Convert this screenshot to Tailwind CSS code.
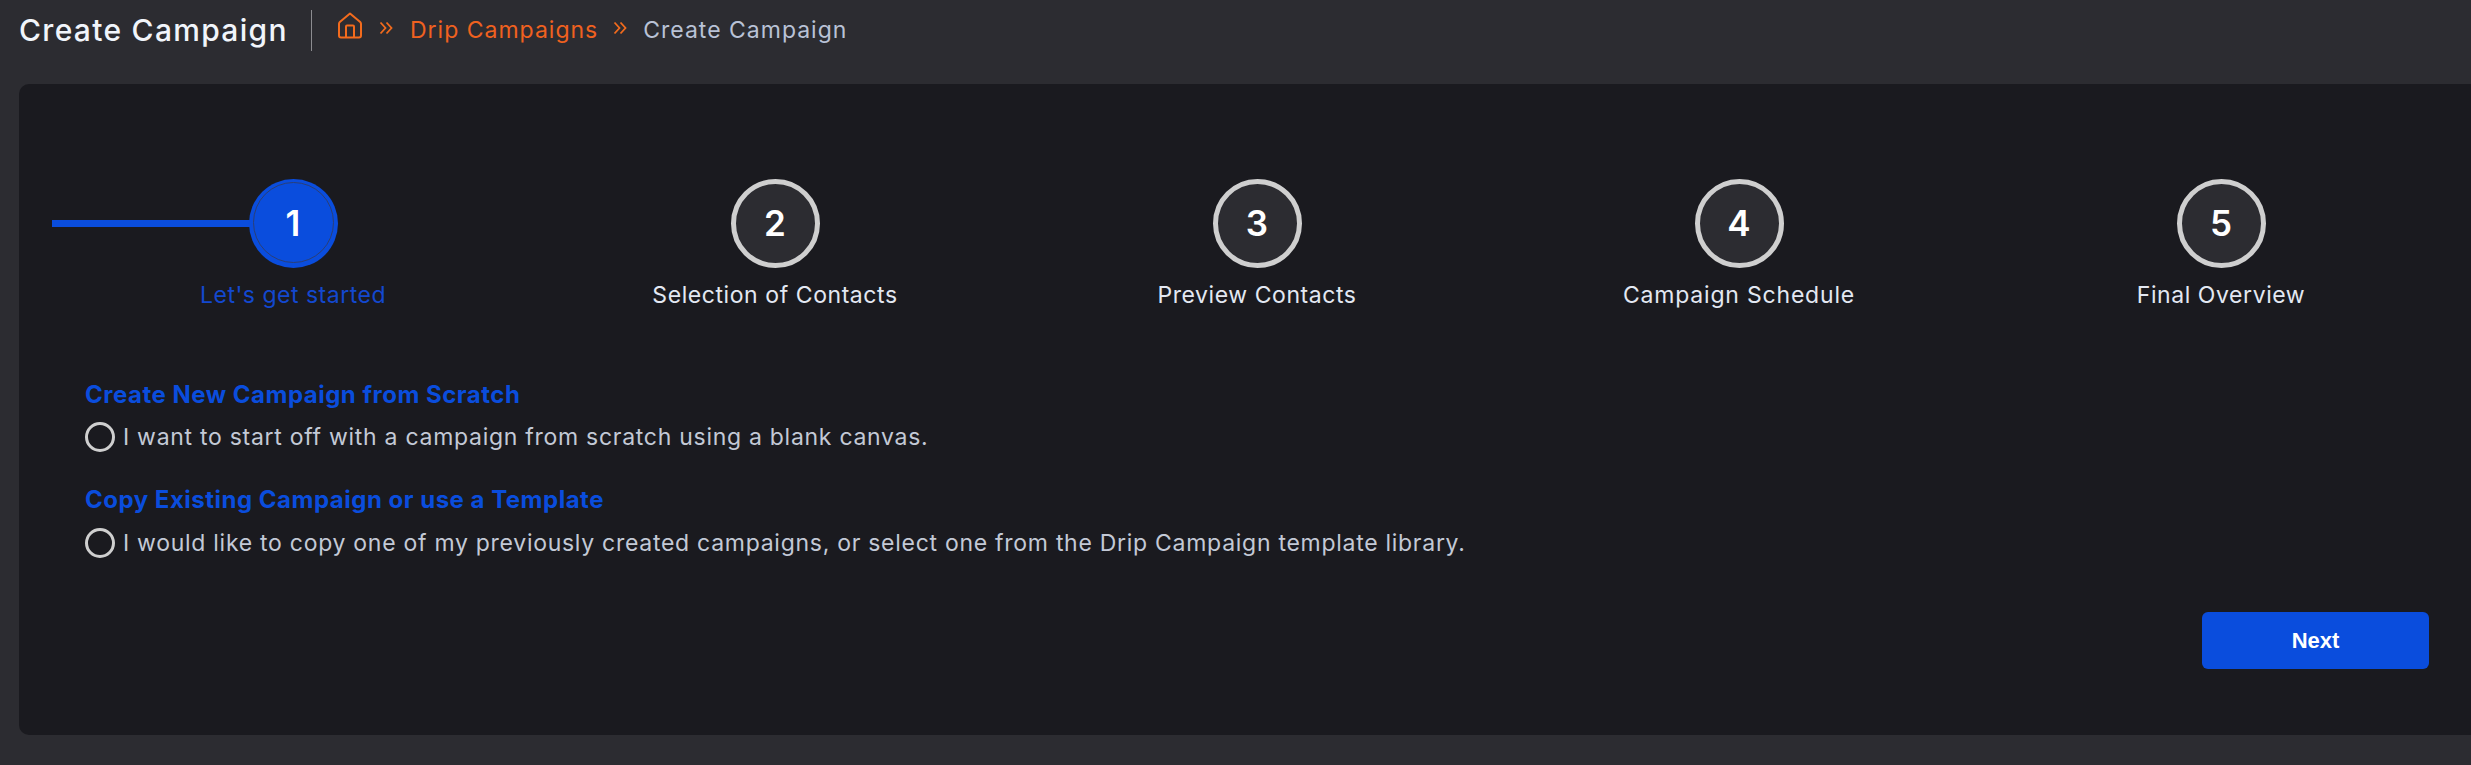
<!DOCTYPE html>
<html><head><meta charset="utf-8"><script src="https://cdn.jsdelivr.net/npm/@tailwindcss/browser@4"></script></head>
<body class="bg-[#2c2c31] font-['Inter',sans-serif] w-[2471px] h-[765px] overflow-hidden">
<header class="h-[84px] pl-[19px] pt-[8px]">
  <div class="flex items-center h-[44px]">
    <h1 class="text-[30px] leading-[44px] font-medium text-[#f1f5fb] w-[269px] whitespace-nowrap tracking-[1.3px]">Create Campaign</h1>
    <div class="w-px h-[41px] bg-[#8c8c90] ml-[23px] mr-[24px]"></div>
    <svg class="w-[28px] h-[28px] -mt-[8px]" viewBox="0 0 28 28" fill="none" stroke="#f26b1d" stroke-width="2" stroke-linejoin="round"><path d="M14 1.500 24.200 10a2.500 2.500 0 0 1 .8 1.800V23.500a2 2 0 0 1-2 2H5a2 2 0 0 1-2-2V11.800a2.500 2.500 0 0 1 .8-1.800Z"/><path d="M10 25.500V14.500a1 1 0 0 1 1-1h6a1 1 0 0 1 1 1V25.500"/></svg>
    <svg class="w-[14px] h-[14px] ml-[15px] -mt-[4px]" viewBox="0 0 14 14" fill="none" stroke="#f26b1d" stroke-width="1.8"><path d="m1.500 1.500 5 5.500-5 5.500M7.500 1.500l5 5.500-5 5.500"/></svg>
    <span class="text-[23px] tracking-[1px] text-[#f0611f] ml-[17px] whitespace-nowrap">Drip Campaigns</span>
    <svg class="w-[14px] h-[14px] ml-[15px] -mt-[4px]" viewBox="0 0 14 14" fill="none" stroke="#f26b1d" stroke-width="1.8"><path d="m1.500 1.500 5 5.500-5 5.500M7.500 1.500l5 5.500-5 5.500"/></svg>
    <span class="text-[23px] tracking-[1px] text-[#b9c2d6] ml-[16px] whitespace-nowrap">Create Campaign</span>
  </div>
</header>
<main class="w-[2452px] h-[651px] ml-[19px] bg-[#1a1a1f] rounded-l-[10px] pt-[95px] pl-[33px]">
  <ol class="grid grid-cols-[repeat(5,482px)]">
    <li class="relative flex flex-col items-center">
      <div class="absolute left-0 top-[41px] w-1/2 h-[7px] bg-[#0a4ddd]"></div>
      <div class="relative w-[89px] h-[89px] rounded-full bg-[#0a4ddd] flex items-center justify-center text-[35px] font-semibold text-white">
        <span class="absolute left-[4px] top-[3px] w-[81px] h-[81px] rounded-full border border-[#2b3f75]"></span>1
      </div>
      <span class="mt-[11px] text-[23px] tracking-[0.5px] leading-[32px] text-[#1348cf]">Let's get started</span>
    </li>
    <li class="flex flex-col items-center">
      <div class="w-[89px] h-[89px] rounded-full bg-[#2c2c31] border-[5px] border-[#cfcfcf] flex items-center justify-center text-[35px] font-semibold text-white">2</div>
      <span class="mt-[11px] text-[23px] tracking-[0.57px] leading-[32px] text-[#e3e8f2]">Selection of Contacts</span>
    </li>
    <li class="flex flex-col items-center">
      <div class="w-[89px] h-[89px] rounded-full bg-[#2c2c31] border-[5px] border-[#cfcfcf] flex items-center justify-center text-[35px] font-semibold text-white">3</div>
      <span class="mt-[11px] text-[23px] tracking-[0.57px] leading-[32px] text-[#e3e8f2]">Preview Contacts</span>
    </li>
    <li class="flex flex-col items-center">
      <div class="w-[89px] h-[89px] rounded-full bg-[#2c2c31] border-[5px] border-[#cfcfcf] flex items-center justify-center text-[35px] font-semibold text-white">4</div>
      <span class="mt-[11px] text-[23px] tracking-[0.8px] leading-[32px] text-[#e3e8f2]">Campaign Schedule</span>
    </li>
    <li class="flex flex-col items-center">
      <div class="w-[89px] h-[89px] rounded-full bg-[#2c2c31] border-[5px] border-[#cfcfcf] flex items-center justify-center text-[35px] font-semibold text-white">5</div>
      <span class="mt-[11px] text-[23px] tracking-[0.57px] leading-[32px] text-[#e3e8f2]">Final Overview</span>
    </li>
  </ol>
  <section class="pl-[33px] mt-[68px]">
    <h2 class="text-[24px] tracking-[0.5px] leading-[32px] font-bold text-[#0a4ddd]">Create New Campaign from Scratch</h2>
    <label class="flex items-center mt-[10px] h-[32px]">
      <span class="w-[30px] h-[30px] rounded-full border-[3px] border-[#cfcfcf] shrink-0"></span>
      <span class="ml-[8px] text-[23px] tracking-[0.72px] text-[#c3c9d6] whitespace-nowrap">I want to start off with a campaign from scratch using a blank canvas.</span>
    </label>
    <h2 class="text-[24px] tracking-[0.5px] leading-[32px] font-bold text-[#0a4ddd] mt-[31px]">Copy Existing Campaign or use a Template</h2>
    <label class="flex items-center mt-[11px] h-[32px]">
      <span class="w-[30px] h-[30px] rounded-full border-[3px] border-[#cfcfcf] shrink-0"></span>
      <span class="ml-[8px] text-[23px] tracking-[0.72px] text-[#c3c9d6] whitespace-nowrap">I would like to copy one of my previously created campaigns, or select one from the Drip Campaign template library.</span>
    </label>
  </section>
  <div class="flex justify-end pr-[42px] mt-[53px]">
    <button class="w-[227px] h-[57px] rounded-[6px] bg-[#0a4ddd] text-white text-[22px] font-bold font-['Liberation_Sans',sans-serif]">Next</button>
  </div>
</main>
</body></html>
